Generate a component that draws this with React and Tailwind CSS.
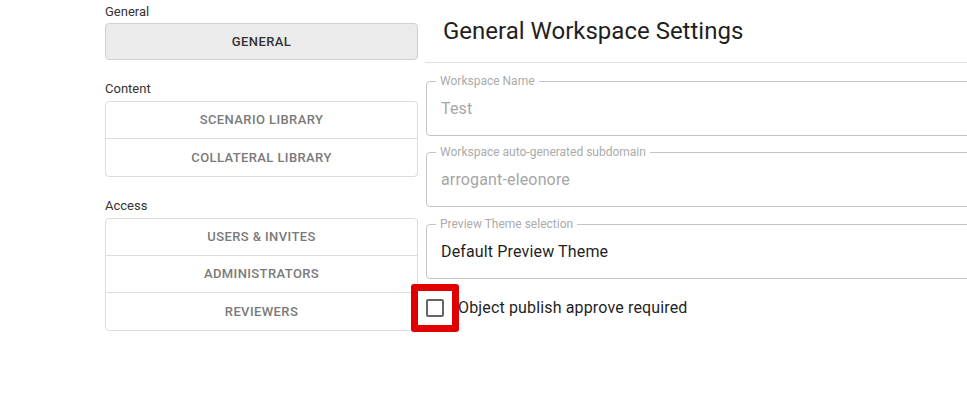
import React from "react";

const font = { fontFamily: "Roboto, 'Liberation Sans', sans-serif" };

function NavButton({ children, active, last }) {
  return (
    <div
      className={`h-[37px] flex items-center justify-center text-[13px] font-medium tracking-[0.4px] uppercase ${
        active ? "text-[#333333]" : "text-[#7a7a7a]"
      } ${last ? "" : "border-b border-[#dcdcdc]"}`}
    >
      {children}
    </div>
  );
}

function Field({ label, value, disabled, className = "" }) {
  return (
    <div
      className={`relative h-[55px] border border-[#c4c4c4] rounded-[4px] flex items-center pl-[14px] ${className}`}
    >
      <span className="absolute -top-[8px] left-[9px] bg-white px-[4px] text-[12px] leading-[14px] text-[#ababab]">
        {label}
      </span>
      <span
        className={`text-[16px] tracking-[0.15px] ${disabled ? "text-[#a6a6a6]" : "text-[#1f1f1f]"}`}
      >
        {value}
      </span>
    </div>
  );
}

export default function App() {
  return (
    <div className="w-[967px] h-[420px] overflow-hidden bg-white" style={font}>
      <div className="flex pl-[105px]">
        {/* Left column */}
        <div className="w-[313px] shrink-0 flex flex-col pt-[4px]">
          <div className="text-[13px] leading-[16px] text-[#333333]">General</div>
          <div className="mt-[3px] h-[37px] rounded-[4px] border border-[#d0d0d0] bg-[#ebebeb] flex items-center justify-center text-[13px] font-medium tracking-[0.4px] text-[#333333]">
            GENERAL
          </div>

          <div className="mt-[21px] text-[13px] leading-[16px] text-[#333333]">Content</div>
          <div className="mt-[4px] rounded-[4px] border border-[#dcdcdc] flex flex-col">
            <NavButton>Scenario Library</NavButton>
            <NavButton last>Collateral Library</NavButton>
          </div>

          <div className="mt-[21px] text-[13px] leading-[16px] text-[#333333]">Access</div>
          <div className="mt-[4px] rounded-[4px] border border-[#dcdcdc] flex flex-col">
            <NavButton>Users &amp; Invites</NavButton>
            <NavButton>Administrators</NavButton>
            <NavButton last>Reviewers</NavButton>
          </div>
        </div>

        {/* Right column */}
        <div className="ml-[7px] w-[620px] shrink-0 flex flex-col">
          <div className="h-[63px] border-b border-[#e0e0e0] flex items-center pl-[18px]">
            <h1 className="text-[24px] text-[#1f1f1f] leading-none -mt-[1px]">
              General Workspace Settings
            </h1>
          </div>
          <div className="mt-[18px] flex flex-col pl-[1px]">
            <Field label="Workspace Name" value="Test" disabled />
            <Field
              className="mt-[16px]"
              label="Workspace auto-generated subdomain"
              value="arrogant-eleonore"
              disabled
            />
            <Field
              className="mt-[17px]"
              label="Preview Theme selection"
              value="Default Preview Theme"
            />
          </div>
          <div className="mt-[5px] flex items-center -ml-[14px]">
            <div className="w-[48px] h-[48px] shrink-0 rounded-[3px] border-[7px] border-[#e00000] flex items-center justify-center">
              <div className="w-[18px] h-[18px] rounded-[2px] border-2 border-[#666666]" />
            </div>
            <span className="-ml-[1px] text-[16px] tracking-[0.15px] text-[#1f1f1f]">
              Object publish approve required
            </span>
          </div>
        </div>
      </div>
    </div>
  );
}
